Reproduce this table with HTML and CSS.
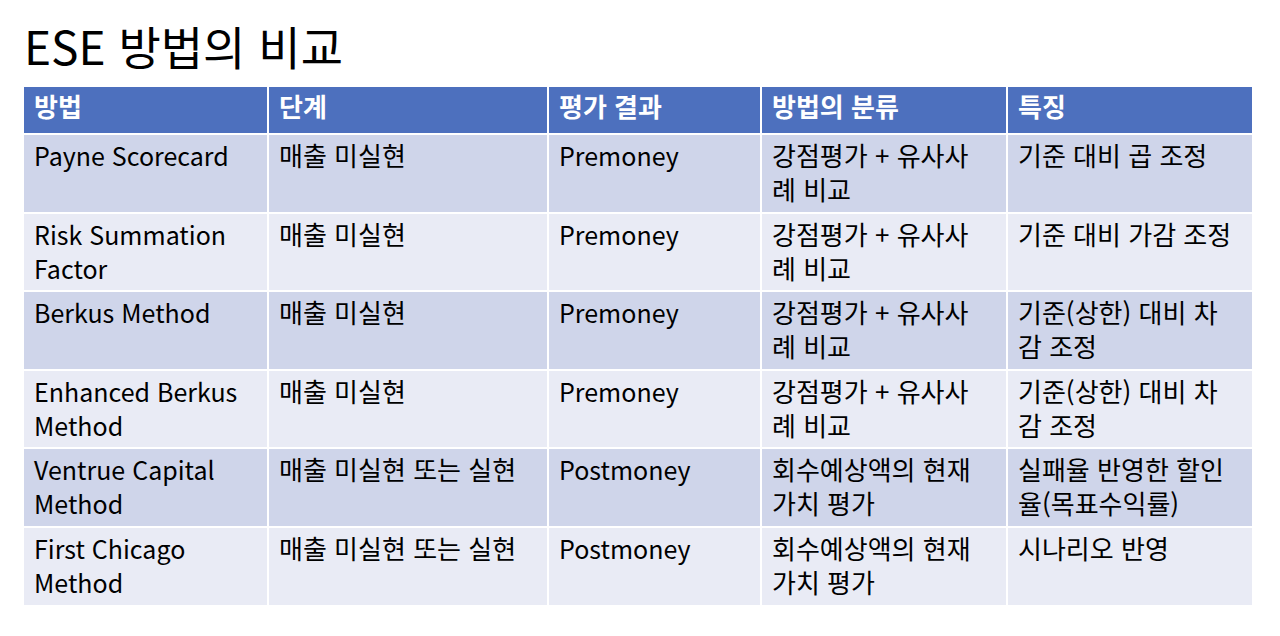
FILE: index.html
```html
<!DOCTYPE html>
<html lang="ko">
<head>
<meta charset="utf-8">
<link rel="stylesheet" href="styles.css">
</head>
<body>
<h1 class="title">ESE 방법의 비교</h1>
<div class="table">
  <div class="cell head">방법</div>
  <div class="cell head">단계</div>
  <div class="cell head">평가 결과</div>
  <div class="cell head">방법의 분류</div>
  <div class="cell head">특징</div>

  <div class="cell odd en">Payne Scorecard</div>
  <div class="cell odd">매출 미실현</div>
  <div class="cell odd en">Premoney</div>
  <div class="cell odd">강점평가 + 유사사<br>례 비교</div>
  <div class="cell odd">기준 대비 곱 조정</div>

  <div class="cell even en">Risk Summation<br>Factor</div>
  <div class="cell even">매출 미실현</div>
  <div class="cell even en">Premoney</div>
  <div class="cell even">강점평가 + 유사사<br>례 비교</div>
  <div class="cell even">기준 대비 가감 조정</div>

  <div class="cell odd en">Berkus Method</div>
  <div class="cell odd">매출 미실현</div>
  <div class="cell odd en">Premoney</div>
  <div class="cell odd">강점평가 + 유사사<br>례 비교</div>
  <div class="cell odd">기준(상한) 대비 차<br>감 조정</div>

  <div class="cell even en">Enhanced Berkus<br>Method</div>
  <div class="cell even">매출 미실현</div>
  <div class="cell even en">Premoney</div>
  <div class="cell even">강점평가 + 유사사<br>례 비교</div>
  <div class="cell even">기준(상한) 대비 차<br>감 조정</div>

  <div class="cell odd en">Ventrue Capital<br>Method</div>
  <div class="cell odd">매출 미실현 또는 실현</div>
  <div class="cell odd en">Postmoney</div>
  <div class="cell odd">회수예상액의 현재<br>가치 평가</div>
  <div class="cell odd">실패율 반영한 할인<br>율(목표수익률)</div>

  <div class="cell even en">First Chicago<br>Method</div>
  <div class="cell even">매출 미실현 또는 실현</div>
  <div class="cell even en">Postmoney</div>
  <div class="cell even">회수예상액의 현재<br>가치 평가</div>
  <div class="cell even">시나리오 반영</div>
</div>
</body>
</html>
```
FILE: styles.css
```css
html, body {
  margin: 0;
  padding: 0;
  background: #ffffff;
}
body {
  width: 1280px;
  height: 636px;
  overflow: hidden;
  font-family: "Noto Sans CJK KR", "Noto Sans", sans-serif;
  color: #000000;
}
.title {
  margin: 0;
  padding: 17px 0 0 24px;
  height: 87px;
  box-sizing: border-box;
  font-size: 46px;
  font-weight: 400;
  line-height: 56px;
}
.table {
  margin-left: 24px;
  width: 1228px;
  display: grid;
  grid-template-columns: 243px 278px 211px 244px 244px;
  grid-template-rows: 46px repeat(6, 76.6px);
  gap: 2px;
}
.cell {
  box-sizing: border-box;
  padding: 3px 10px 0 10px;
  font-size: 26px;
  line-height: 34px;
  white-space: nowrap;
}
.en {
  font-size: 25px;
}
.head {
  background: #4d70be;
  color: #ffffff;
  font-weight: 700;
  padding-top: 2px;
}
.odd {
  background: #cfd5ea;
}
.even {
  background: #e9ebf5;
}
```
